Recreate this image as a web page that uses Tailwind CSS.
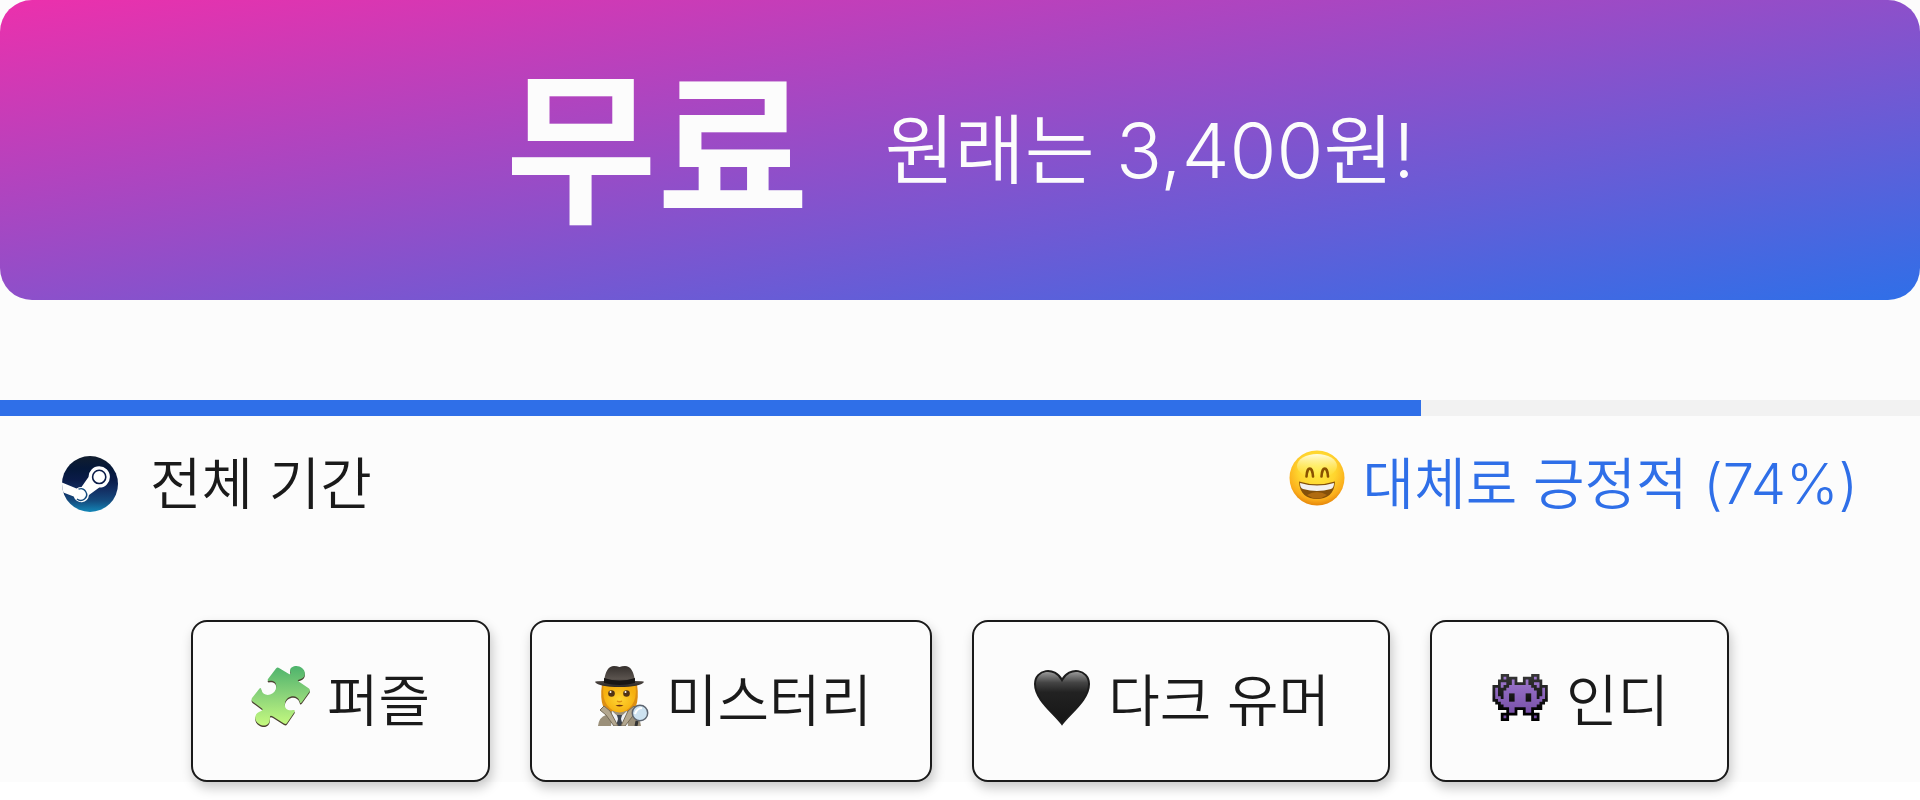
<!doctype html>
<html lang="ko">
  <head>
    <meta charset="UTF-8" />
    <meta name="viewport" content="width=device-width, initial-scale=1.0" />
    <title>게임 정보</title>
    <script src="https://cdn.jsdelivr.net/npm/@tailwindcss/browser@4"></script>
  </head>
  <body class="min-h-screen bg-white text-[#1a1a1a] font-[350] font-['Inter','Noto_Sans_CJK_KR',sans-serif]">
    <main class="bg-[#fcfcfc]">
      <!-- 가격 배너 -->
      <section class="flex items-center justify-center gap-[76px] h-[300px] rounded-[32px] bg-[linear-gradient(to_bottom_right,#ec30ac,#2f6fe8)] text-[#fcfcfc]">
        <strong class="text-[165px] leading-none font-bold">무료</strong>
        <span class="text-[76px] leading-none">원래는 3,400원!</span>
      </section>
      <!-- 평가 -->
      <section class="mt-[100px]">
        <div class="h-4 bg-[#f2f2f2]">
          <div class="h-full bg-[#2f6fe8]" style="width: 74%"></div>
        </div>
        <div class="flex items-center justify-between px-[62px] pt-8 text-[56px] leading-[72px]">
          <div class="flex items-center gap-8">
            <svg class="size-14" viewBox="0 0 56 56">
              <defs>
                <linearGradient id="steam" x2="0" y2="1">
                  <stop stop-color="#111d2e" />
                  <stop offset=".22" stop-color="#051839" />
                  <stop offset=".42" stop-color="#0a1b48" />
                  <stop offset=".6" stop-color="#132e62" />
                  <stop offset=".8" stop-color="#144b7e" />
                  <stop offset="1" stop-color="#1387b8" />
                </linearGradient>
                <clipPath id="disc"><circle cx="28" cy="28" r="28" /></clipPath>
              </defs>
              <circle cx="28" cy="28" r="28" fill="url(#steam)" />
              <g clip-path="url(#disc)">
                <path fill="#fff" d="M-1 26L14.500 32.400Q17 31 19.500 31L26.500 21A10.700 10.700 0 1 1 37.300 31.600L27 39A7.800 7.800 0 0 1 11.700 40.500L-1 35.500Z" />
                <circle cx="37.200" cy="20.900" r="6.600" fill="none" stroke="#0a1b48" stroke-width="1.600" />
                <path d="M16.500 33.200A5.800 5.800 0 1 1 15 43" fill="none" stroke="#144b7e" stroke-width="1.400" />
              </g>
            </svg>
            <span>전체 기간</span>
          </div>
          <div class="flex items-center gap-4 text-[#2f6fe8]">
            <svg class="size-[60px] mb-1 overflow-visible" viewBox="0 0 60 60">
              <defs>
                <radialGradient id="face" cx=".5" cy=".35" r=".68">
                  <stop stop-color="#ffec45" />
                  <stop offset=".5" stop-color="#ffd52e" />
                  <stop offset=".8" stop-color="#fbae1c" />
                  <stop offset="1" stop-color="#e07b04" />
                </radialGradient>
                <linearGradient id="shine" x2="0" y2="1">
                  <stop stop-color="#fffce0" />
                  <stop offset="1" stop-color="#fff04d" stop-opacity="0" />
                </linearGradient>
              </defs>
              <circle cx="30" cy="26" r="27.500" fill="url(#face)" />
              <ellipse cx="30" cy="14" rx="20" ry="12" fill="url(#shine)" />
              <path d="M19.500 24.500C20 14 25.500 14 26 24.500M34.500 24.500C35 14 40.500 14 41 24.500" fill="none" stroke="#8a5200" stroke-width="2.600" stroke-linecap="round" />
              <path d="M12 29.500Q30 35 48 29.500C47.500 42 40 47 30 47S12.500 42 12 29.500Z" fill="#83500a" />
              <path d="M13 31Q30 36 47 31Q47 36 44 37Q30 41 16 37Q13 36 13 31Z" fill="#f3f1f0" />
              <path d="M20 43Q30 37 40 43Q30 50 20 43Z" fill="#b06b10" />
            </svg>
            <span>대체로 긍정적 (74%)</span>
          </div>
        </div>
      </section>
      <!-- 태그 -->
      <section class="mt-[100px] flex justify-center gap-10 text-[56px] leading-[72px]">
        <button class="flex items-center gap-4 rounded-[16px] border-2 border-[#1a1a1a] bg-[#fcfcfc] px-[58px] py-[43px] shadow-[2px_6px_12px_rgba(0,0,0,0.22)]">
          <svg class="size-[60px] mb-2.5 overflow-visible" viewBox="0 0 60 60">
            <defs>
              <linearGradient id="puzzle" x2="0" y2="1">
                <stop stop-color="#4db36c" />
                <stop offset=".5" stop-color="#8cd47a" />
                <stop offset="1" stop-color="#c5fa7f" />
              </linearGradient>
              <path id="piece" d="M25 2.500Q26.500 1 28 2L38 8Q40 9 39.500 6.500C37 0 47-2 51 2C55 5 55 11 50 13Q46 14 47 15L58 22.500Q59.500 24 58.500 25.500L51 36C49.500 38 49 37 48.500 35C46 27 35 30 34 37C33 43 37 45 42 44Q44.500 43.500 43.500 46L36 57Q35 58.500 33 57.500L22 50.500Q18.500 48.500 19 52C19 60 13 61 8 58C3 55 3 48 8 46Q13 44 11 42.500L1.500 35.500Q0 34 1 32L8.500 22.500Q10 21 10.500 24C12 31 22 30 24.500 24C27 17 23 14 18 15Q16 15 17 13Z" />
            </defs>
            <use href="#piece" y="1.500" fill="#4a4030" />
            <use href="#piece" fill="url(#puzzle)" />
          </svg>
          <span>퍼즐</span>
        </button>
        <button class="flex items-center gap-4 rounded-[16px] border-2 border-[#1a1a1a] bg-[#fcfcfc] px-[58px] py-[43px] shadow-[2px_6px_12px_rgba(0,0,0,0.22)]">
          <svg class="size-[60px] mb-2.5" viewBox="0 0 60 60">
            <defs>
              <linearGradient id="hat" x2="0" y2="1">
                <stop stop-color="#35302d" />
                <stop offset=".6" stop-color="#5a534e" />
                <stop offset="1" stop-color="#2b2725" />
              </linearGradient>
              <radialGradient id="skin">
                <stop stop-color="#ffd633" />
                <stop offset="1" stop-color="#f6b010" />
              </radialGradient>
            </defs>
            <path d="M12 18H47Q49 32 46 40L38 47H21L13 40Q10 32 12 18Z" fill="#dd8f13" />
            <path d="M8 60Q9 51 16 49L22 45H37L44 49Q50 51 51 60Z" fill="#9b907a" />
            <path d="M22 45L29.500 52L37 45L38 60H21Z" fill="#eef0f3" />
            <path d="M27 49H32L31 53L33 60H26L28 53Z" fill="#3b424d" />
            <path d="M14 40L10 44L16 49L24 60H28L20 45ZM44 40L47 44L42 51L35 60H31L38 45Z" fill="#b3a78f" stroke="#756b58" stroke-width="1" />
            <path d="M13.500 20H45.500Q47 32 42 39Q36 46.500 29.500 46.500T17 39Q12 32 13.500 20Z" fill="url(#skin)" />
            <circle cx="21.500" cy="27.500" r="3.300" fill="#513315" />
            <circle cx="36.500" cy="27.500" r="3.300" fill="#513315" />
            <circle cx="20.500" cy="26" r="1" fill="#fff" />
            <circle cx="35.500" cy="26" r="1" fill="#fff" />
            <path d="M27 35Q29.500 36.500 32 35" fill="none" stroke="#dd8f13" stroke-width="1.400" />
            <path d="M25.500 39.500Q29.500 38 33.500 39.500Q29.500 41.500 25.500 39.500Z" fill="#6e3011" />
            <path d="M14 15Q16 0 24 0Q27 0 29.500 1Q32 0 35 0Q43 0 45 15Q54 15 54 16Q50 21 29.500 21T5 16Q5 15 14 15Z" fill="url(#hat)" />
            <path d="M14 12Q29.500 17 45 12V17Q29.500 21 14 17Z" fill="#181615" />
            <circle cx="50" cy="47" r="7.700" fill="#cde2f0" stroke="#5d6570" stroke-width="1.500" />
            <path d="M45 48Q47 42 52 42" fill="none" stroke="#fff" stroke-width="2" />
            <path d="M47 55L46 60" stroke="#333" stroke-width="3" />
          </svg>
          <span>미스터리</span>
        </button>
        <button class="flex items-center gap-4 rounded-[16px] border-2 border-[#1a1a1a] bg-[#fcfcfc] px-[58px] py-[43px] shadow-[2px_6px_12px_rgba(0,0,0,0.22)]">
          <svg class="size-[60px] mb-2.5" viewBox="0 0 60 60">
            <defs>
              <linearGradient id="heart" x2="0" y2="1">
                <stop stop-color="#a0a0a0" />
                <stop offset=".22" stop-color="#444" />
                <stop offset=".4" stop-color="#222" />
                <stop offset="1" stop-color="#151515" />
              </linearGradient>
            </defs>
            <path d="M30 58C22 47 3 34 3 18C3 3 23 0 30 14C37 0 57 3 57 18C57 34 38 47 30 58Z" fill="url(#heart)" stroke="#1c1c1c" stroke-width="2" />
          </svg>
          <span>다크 유머</span>
        </button>
        <button class="flex items-center gap-4 rounded-[16px] border-2 border-[#1a1a1a] bg-[#fcfcfc] px-[58px] py-[43px] shadow-[2px_6px_12px_rgba(0,0,0,0.22)]">
          <svg class="size-[60px] mb-2.5" viewBox="-0.9 -2.9 21.700 21.700">
            <defs>
              <linearGradient id="alien" gradientUnits="userSpaceOnUse" x1="0" y1="0" x2="0" y2="17">
                <stop stop-color="#a07ad0" />
                <stop offset="1" stop-color="#7048a0" />
              </linearGradient>
              <linearGradient id="outline" gradientUnits="userSpaceOnUse" x1="0" y1="0" x2="0" y2="17">
                <stop stop-color="#383838" />
                <stop offset=".8" stop-color="#000" />
              </linearGradient>
              <!-- 왼쪽 절반, 오른쪽은 좌우 반전 -->
              <g id="half">
                <path fill="url(#outline)" d="M3 0H6V1H9V3H10.050V13H9V15H6V17H3V14H5V13H2V11H1V10H0V4H2V2H3Z" />
                <path fill="url(#alien)" d="M4 1h1v1h-1zM7 2h1v2h2.050v8H9V12H8V14H6V12H4V11H3V10H2V9H1V5H2V8H3V9H4V6H5V5H6V4H7ZM3 3H5V4H4V5H3ZM4 15h1v1h-1z" />
                <path fill="url(#outline)" d="M6 7h2v3h-2z" />
              </g>
            </defs>
            <use href="#half" />
            <use href="#half" transform="translate(20 0) scale(-1 1)" />
          </svg>
          <span>인디</span>
        </button>
      </section>
    </main>
  </body>
</html>
